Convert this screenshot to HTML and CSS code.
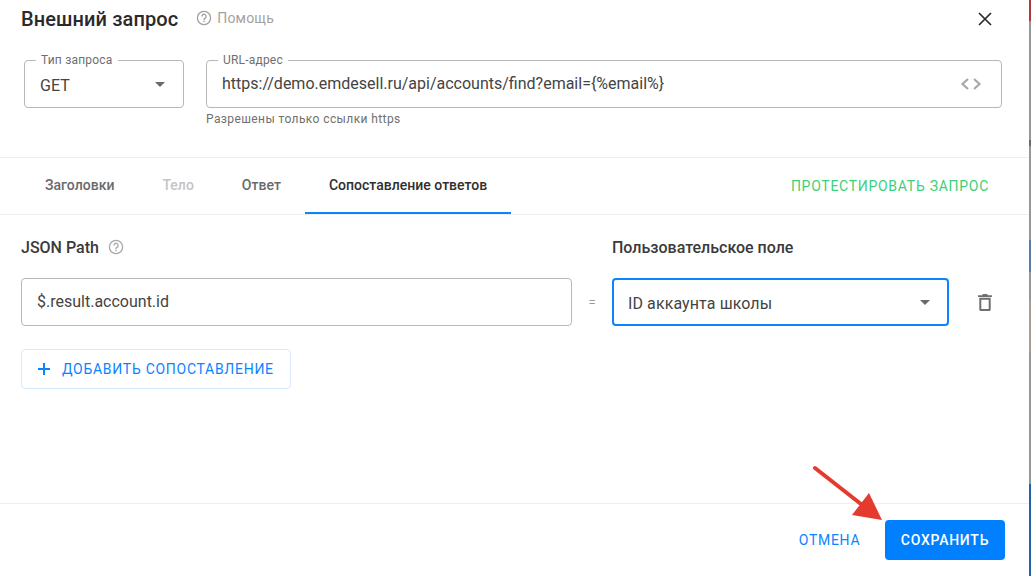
FILE: index.html
```html
<!DOCTYPE html>
<html lang="ru">
<head>
<meta charset="utf-8">
<title>Внешний запрос</title>
<link rel="stylesheet" href="styles.css">
</head>
<body>
<div class="screen">
  <main class="dialog">
    <header class="head">
      <div class="title-row">
        <h1 class="title">Внешний запрос</h1>
        <a class="help">
          <svg class="help-icon" viewBox="0 0 16 16"><circle cx="8" cy="8" r="6.6" fill="none" stroke="currentColor" stroke-width="1.3"/><path d="M5.9 6.4a2.1 2.1 0 1 1 3.3 1.7c-.8.5-1.2.9-1.2 1.8" fill="none" stroke="currentColor" stroke-width="1.3"/><rect x="7.3" y="10.7" width="1.4" height="1.4" fill="currentColor"/></svg>
          Помощь
        </a>
        <svg class="close" viewBox="0 0 14 14"><path d="M1 1l12 12M13 1L1 13" fill="none" stroke="#2b2b2b" stroke-width="1.7"/></svg>
      </div>
      <div class="request-row">
        <div class="field field-type">
          <span class="legend">Тип запроса</span>
          <span class="value value-get">GET</span>
          <span class="caret"></span>
        </div>
        <div class="url-col">
          <div class="field">
            <span class="legend">URL-адрес</span>
            <span class="value value-url">https://demo.emdesell.ru/api/accounts/find?email={%email%}</span>
            <svg class="code" viewBox="0 0 22 14"><path d="M8 2L2.5 7 8 12M14 2l5.500 5L14 12" fill="none" stroke="#a8a8a8" stroke-width="2.2"/></svg>
          </div>
          <p class="hint">Разрешены только ссылки https</p>
        </div>
      </div>
    </header>

    <nav class="tabs">
      <a class="tab">Заголовки</a>
      <a class="tab tab-disabled">Тело</a>
      <a class="tab">Ответ</a>
      <a class="tab tab-active">Сопоставление ответов</a>
      <a class="test">ПРОТЕСТИРОВАТЬ ЗАПРОС</a>
    </nav>

    <section class="content">
      <div class="map-grid">
        <div class="col-label">JSON Path
          <svg class="label-help" viewBox="0 0 16 16"><circle cx="8" cy="8" r="6.6" fill="none" stroke="currentColor" stroke-width="1.3"/><path d="M5.900 6.400a2.100 2.100 0 1 1 3.300 1.700c-.8.5-1.200.9-1.200 1.800" fill="none" stroke="currentColor" stroke-width="1.3"/><rect x="7.300" y="10.700" width="1.400" height="1.400" fill="currentColor"/></svg>
        </div>
        <div></div>
        <div class="col-label">Пользовательское поле</div>
        <div></div>
        <div class="field field-plain"><span class="value">$.result.account.id</span></div>
        <div class="equals">=</div>
        <div class="field field-focus"><span class="value value-id">ID аккаунта школы</span><span class="caret"></span></div>
        <svg class="trash" viewBox="0 0 14 18"><path d="M2.300 5.800h9.400v10.400a.9.9 0 0 1-.9.9H3.200a.9.9 0 0 1-.9-.9z" fill="none" stroke="#6f6f6f" stroke-width="2"/><path d="M0 2.300h4l1-1.300h4l1 1.300h4v1.800H0z" fill="#6f6f6f"/></svg>
      </div>
      <button class="add">
        <svg class="plus" viewBox="0 0 12 12"><path d="M6 0v12M0 6h12" fill="none" stroke="#0a84ff" stroke-width="2"/></svg>
        ДОБАВИТЬ СОПОСТАВЛЕНИЕ
      </button>
    </section>

    <footer class="foot">
      <button class="cancel">ОТМЕНА</button>
      <button class="save">СОХРАНИТЬ</button>
    </footer>
  </main>
  <aside class="behind"></aside>
  <svg class="arrow" viewBox="0 0 1031 576"><path d="M815 468L866 508" stroke="#e53a2e" stroke-width="4" stroke-linecap="round" fill="none"/><path d="M882 520L869 493L852 515z" fill="#e53a2e"/></svg>
</div>
</body>
</html>
```

FILE: styles.css
```css
* { box-sizing: border-box; }
html, body { margin: 0; height: 100%; overflow: hidden; }
body { font-family: Roboto, "Liberation Sans", sans-serif; color: #333; background: #fff; }
.screen { display: flex; width: 1031px; height: 576px; position: relative; }
.dialog { width: 1029px; height: 576px; display: flex; flex-direction: column; background: #fff; }
.behind { width: 2px; height: 576px; background: linear-gradient(#a83a3a 0 21px, #979797 21px 140px, #6f6a55 140px 146px, #979797 146px 240px, #5b7da0 240px 272px, #979797 272px 300px, #a79f8f 300px 352px, #979797 352px 484px, #1c62ad 484px 576px); }

.head { height: 158px; border-bottom: 1px solid #eeeeee; padding: 0 27px 0 21px; flex: none; }
.title-row { display: flex; align-items: center; height: 38px; }
.title { margin: 0; font-size: 20px; font-weight: 500; color: #2a2a2a; letter-spacing: .1px; line-height: 24px; }
.help { display: flex; align-items: center; gap: 5px; margin-left: 18px; margin-top: -2px; font-size: 14px; color: #a3a3a3; letter-spacing: .2px; }
.help-icon { width: 16px; height: 16px; color: #a0a0a0; }
.close { width: 14px; height: 14px; margin-left: auto; margin-right: 10px; }

.request-row { display: flex; gap: 22px; padding: 22px 0 0 3px; }
.field { position: relative; display: flex; align-items: center; height: 48px; border: 1px solid #b8b8b8; border-radius: 4px; padding: 0 15px; background: #fff; }
.field-type { width: 160px; flex: none; }
.url-col { flex: 1; }
.legend { position: absolute; left: 11px; top: -8px; padding: 0 5px; background: #fff; font-size: 12px; line-height: 14px; color: #6f6f6f; letter-spacing: .2px; }
.value { font-size: 16px; color: #444; line-height: 20px; }
.value-get { margin-top: 4px; }
.value-url { margin-top: -1px; }
.value-id { margin-top: 4px; letter-spacing: .1px; }
.caret { width: 0; height: 0; margin-left: auto; margin-right: 3px; border-left: 5px solid transparent; border-right: 5px solid transparent; border-top: 5px solid #6a6a6a; }
.code { width: 22px; height: 14px; margin-left: auto; margin-right: 4px; }
.hint { margin: 3px 0 0; font-size: 12px; line-height: 16px; color: #6f6f6f; letter-spacing: .4px; }

.tabs { display: flex; align-items: stretch; height: 57px; flex: none; border-bottom: 1px solid #eeeeee; padding: 0 40px 0 21px; }
.tab { display: flex; align-items: center; padding: 0 24px 2px; font-size: 14px; font-weight: 500; color: #6a6a6a; letter-spacing: .02px; }
.tab-disabled { color: #c4c4c4; }
.tab-active { color: #2f2f2f; box-shadow: inset 0 -2px 0 #0a84ff; }
.test { margin-left: auto; align-self: center; font-size: 14px; font-weight: 400; color: #3ecf7a; letter-spacing: .72px; white-space: nowrap; }

.content { flex: 1; padding: 0 21px; }
.map-grid { display: grid; grid-template-columns: 551px 40px 337px 1fr; align-items: center; grid-template-rows: 48px 48px; margin-top: 8px; row-gap: 7px; }
.col-label { display: flex; align-items: center; gap: 9px; font-size: 16px; font-weight: 500; color: #3a3a3a; }
.label-help { width: 16px; height: 16px; color: #a8a8a8; }
.equals { text-align: center; font-size: 13px; color: #999; }
.field-focus { border: 2px solid #0a84ff; padding: 0 14px; }
.trash { width: 14px; height: 18px; justify-self: end; margin-right: 16px; }
.add { display: flex; align-items: center; gap: 12px; width: 270px; height: 40px; margin-top: 23px; padding: 0 16px; border: 1px solid #d6e9ff; border-radius: 4px; background: #fff; color: #0a84ff; font: 400 14px Roboto, sans-serif; letter-spacing: .72px; white-space: nowrap; }
.plus { width: 12px; height: 12px; flex: none; }

.foot { display: flex; align-items: center; justify-content: flex-end; height: 73px; flex: none; border-top: 1px solid #eeeeee; padding: 0 24px 0 0; }
.cancel, .save { font: 500 14px Roboto, sans-serif; letter-spacing: .75px; border: 0; border-radius: 4px; height: 40px; }
.cancel { background: none; color: #0a84ff; font-weight: 400; letter-spacing: .72px; width: 120px; padding: 0 0 0 9px; margin-top: -1px; }
.save { background: #0080ff; color: #fff; width: 120px; padding: 0; }
.arrow { position: absolute; left: 0; top: 0; width: 1031px; height: 576px; pointer-events: none; }
```
